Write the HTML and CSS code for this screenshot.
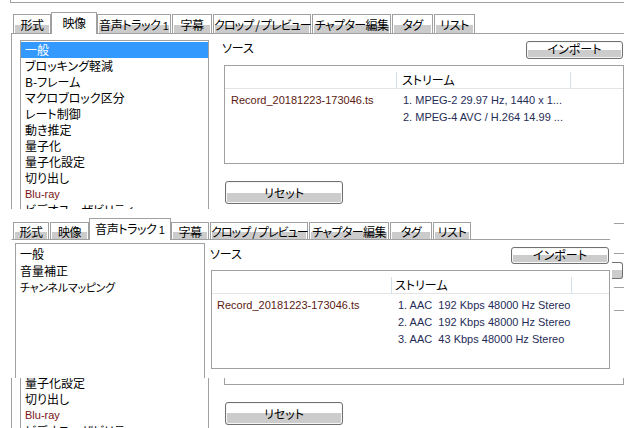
FILE: index.html
```html
<!DOCTYPE html>
<html lang="ja">
<head>
<meta charset="utf-8">
<title>Encoder settings</title>
<link rel="stylesheet" href="styles.css">
</head>
<body>
<div class="shot shot-top">
  <div class="win win-video">
    <div class="edge"></div>
    <div class="tabs">
      <div class="tab t-fmt">形式</div>
      <div class="tab t-vid active">映像</div>
      <div class="tab t-aud">音声トラック <span class="num">1</span></div>
      <div class="tab t-sub">字幕</div>
      <div class="tab t-crop">クロップ / プレビュー</div>
      <div class="tab t-chap">チャプター編集</div>
      <div class="tab t-tag">タグ</div>
      <div class="tab t-list">リスト</div>
    </div>
    <div class="panel">
      <ul class="listbox">
        <li class="sel">一般</li>
        <li>ブロッキング軽減</li>
        <li>B-フレーム</li>
        <li>マクロブロック区分</li>
        <li>レート制御</li>
        <li>動き推定</li>
        <li>量子化</li>
        <li>量子化設定</li>
        <li>切り出し</li>
        <li class="latin">Blu-ray</li>
        <li>ビデオユーザビリティ</li>
      </ul>
      <div class="side">
        <div class="src-row">
          <span class="src-label">ソース</span>
          <button class="btn btn-import">インポート</button>
        </div>
        <div class="streams">
          <div class="st-head">
            <div class="c1"></div>
            <div class="c2">ストリーム</div>
            <div class="c3"></div>
          </div>
          <div class="st-body">
            <div class="st-row"><div class="c1 file">Record_20181223-173046.ts</div><div class="c2 info">1. MPEG-2 29.97 Hz, 1440 x 1...</div></div>
            <div class="st-row"><div class="c1"></div><div class="c2 info">2. MPEG-4 AVC / H.264 14.99 ...</div></div>
          </div>
        </div>
        <button class="btn btn-reset">リセット</button>
      </div>
    </div>
  </div>
</div>

<div class="shot shot-mid">
  <div class="win win-audio">
    <div class="tabs">
      <div class="tab t-fmt">形式</div>
      <div class="tab t-vid">映像</div>
      <div class="tab t-aud active">音声トラック <span class="num">1</span></div>
      <div class="tab t-sub">字幕</div>
      <div class="tab t-crop">クロップ / プレビュー</div>
      <div class="tab t-chap">チャプター編集</div>
      <div class="tab t-tag">タグ</div>
      <div class="tab t-list">リスト</div>
    </div>
    <div class="panel">
      <ul class="listbox">
        <li>一般</li>
        <li>音量補正</li>
        <li class="small">チャンネルマッピング</li>
      </ul>
      <div class="side">
        <div class="src-row">
          <span class="src-label">ソース</span>
          <button class="btn btn-import">インポート</button>
        </div>
        <div class="streams">
          <div class="st-head">
            <div class="c1"></div>
            <div class="c2">ストリーム</div>
            <div class="c3"></div>
          </div>
          <div class="st-body">
            <div class="st-row"><div class="c1 file">Record_20181223-173046.ts</div><div class="c2 info">1. AAC  192 Kbps 48000 Hz Stereo</div></div>
            <div class="st-row"><div class="c1"></div><div class="c2 info">2. AAC  192 Kbps 48000 Hz Stereo</div></div>
            <div class="st-row"><div class="c1"></div><div class="c2 info">3. AAC  43 Kbps 48000 Hz Stereo</div></div>
          </div>
        </div>
      </div>
    </div>
  </div>
  <div class="strip">
    <div class="s-line s1"></div>
    <div class="s-line s2"></div>
    <div class="s-btn"></div>
    <div class="s-line s3"></div>
    <div class="s-line s4"></div>
  </div>
</div>

<div class="shot shot-low">
  <div class="win win-video win-scrolled">
    <div class="edge"></div>
    <div class="tabs">
      <div class="tab t-fmt">形式</div>
      <div class="tab t-vid active">映像</div>
      <div class="tab t-aud">音声トラック <span class="num">1</span></div>
      <div class="tab t-sub">字幕</div>
      <div class="tab t-crop">クロップ / プレビュー</div>
      <div class="tab t-chap">チャプター編集</div>
      <div class="tab t-tag">タグ</div>
      <div class="tab t-list">リスト</div>
    </div>
    <div class="panel">
      <ul class="listbox">
        <li class="sel">一般</li>
        <li>ブロッキング軽減</li>
        <li>B-フレーム</li>
        <li>マクロブロック区分</li>
        <li>レート制御</li>
        <li>動き推定</li>
        <li>量子化</li>
        <li>量子化設定</li>
        <li>切り出し</li>
        <li class="latin">Blu-ray</li>
        <li>ビデオユーザビリティ</li>
      </ul>
      <div class="side">
        <div class="src-row">
          <span class="src-label">ソース</span>
          <button class="btn btn-import">インポート</button>
        </div>
        <div class="streams">
          <div class="st-head">
            <div class="c1"></div>
            <div class="c2">ストリーム</div>
            <div class="c3"></div>
          </div>
          <div class="st-body">
            <div class="st-row"><div class="c1 file">Record_20181223-173046.ts</div><div class="c2 info">1. MPEG-2 29.97 Hz, 1440 x 1...</div></div>
            <div class="st-row"><div class="c1"></div><div class="c2 info">2. MPEG-4 AVC / H.264 14.99 ...</div></div>
          </div>
        </div>
        <button class="btn btn-reset">リセット</button>
      </div>
    </div>
  </div>
</div>
</body>
</html>
```

FILE: styles.css
```css
* {
  box-sizing: border-box;
  margin: 0;
  padding: 0;
}

body {
  width: 624px;
  height: 428px;
  overflow: hidden;
  background: #fff;
  color: #000;
  font-family: "Noto Sans CJK JP", "Liberation Sans", sans-serif;
  font-size: 12px;
  font-feature-settings: "palt";
}

.shot {
  width: 624px;
  overflow: hidden;
}

.shot-top { height: 209px; }
.shot-mid { height: 169px; display: flex; }
.shot-low { height: 50px; }

.win { width: 624px; }
.win-scrolled { margin-top: -157px; }

.edge {
  margin-left: 10px;
  height: 3px;
  border-left: 1px solid #a0a0a0;
  border-bottom: 1px solid #a0a0a0;
}

/* tabs */
.tabs {
  display: flex;
  align-items: flex-end;
  gap: 1px;
  height: 21px;
  margin: 9px 0 0 13px;
}

.tab {
  flex: none;
  height: 19px;
  line-height: 19px;
  text-align: center;
  white-space: nowrap;
  letter-spacing: -0.4px;
  border: 1px solid #a0a0a0;
  border-bottom: none;
  background: linear-gradient(#fff 0 55%, #cbcbcb 55%);
  box-shadow: inset 1px 1px 0 #fff, inset -1px 0 0 #fff;
}

.tab.active {
  position: relative;
  z-index: 1;
  height: 22px;
  line-height: 19px;
  margin: 0 -1px -1px -1px;
  background: #fff;
  box-shadow: none;
}

.num {
  font-family: "Liberation Sans", sans-serif;
  font-size: 11px;
  letter-spacing: 0;
}

.t-fmt { width: 38px; }
.t-vid { width: 40px; }
.t-vid.active { width: 46px; }
.t-aud { width: 74px; }
.t-sub { width: 40px; }
.t-crop { width: 98px; letter-spacing: -0.9px; }
.t-chap { width: 79px; letter-spacing: -0.6px; }
.t-tag { width: 41px; }
.t-list { width: 41px; }

/* panel */
.panel {
  display: flex;
  margin-left: 11px;
  border-top: 1px solid #a0a0a0;
  border-left: 1px solid #a0a0a0;
  padding: 6px 0 0 8px;
}

.listbox {
  list-style: none;
  flex: none;
  width: 189px;
  height: 210px;
  border: 1px solid #a0a0a0;
  padding: 1px 0;
}

.listbox li {
  height: 16px;
  line-height: 16px;
  padding-left: 4px;
  white-space: nowrap;
}

.listbox li.sel {
  background: #3399ff;
  color: #fff;
}

.listbox li.latin {
  font-family: "Liberation Sans", sans-serif;
  font-size: 11px;
  color: #7a1414;
}

.listbox li.small {
  font-size: 11px;
  letter-spacing: -0.3px;
}

.side {
  flex: 1;
  min-width: 0;
  padding-left: 13px;
}

.src-row {
  display: flex;
  justify-content: space-between;
  align-items: flex-start;
}

.src-label {
  line-height: 15px;
}

.btn {
  display: block;
  border: 1px solid #707070;
  border-radius: 3px;
  background: linear-gradient(#fff 0 50%, #cccccc 50%);
  box-shadow: inset 0 0 0 1px #f6f6f6;
  font-family: "Noto Sans CJK JP", sans-serif;
  font-size: 12px;
  font-feature-settings: "palt";
  color: #000;
  text-align: center;
}

.btn-import {
  width: 97px;
  height: 18px;
  margin: 1px 1px 0 0;
  line-height: 12px;
  padding-bottom: 3px;
}

.btn-reset {
  width: 118px;
  height: 23px;
  margin: 17px 0 0 3px;
  line-height: 20px;
}

/* streams list */
.streams {
  height: 99px;
  margin: 6px 0 0 2px;
  border: 1px solid #a0a0a0;
  padding-top: 6px;
}

.st-head {
  display: flex;
  height: 17px;
  line-height: 16px;
  border-bottom: 1px solid #e4e4e4;
}

.st-head .c1,
.st-head .c2 {
  border-right: 1px solid #d4e0ea;
}

.st-head .c2 {
  padding-left: 5px;
}

.c1 { flex: none; width: 172px; }
.c2 { flex: none; width: 174px; }
.c3 { flex: 1; }

.st-body {
  padding-top: 3px;
}

.st-row {
  display: flex;
  height: 17px;
  line-height: 17px;
  font-family: "Liberation Sans", sans-serif;
  font-size: 11px;
  white-space: pre;
}

.st-row .c1 { padding-left: 6px; }
.st-row .c2 { padding-left: 6px; }

.file { color: #5c1a12; }
.info { color: #1f2d58; }

/* audio window variant */
.win-audio {
  width: 610px;
  flex: none;
}

.win-audio .tabs { margin-top: 9px; }

.win-audio .tab {
  height: 17px;
  line-height: 17px;
}

.win-audio .tab.active {
  height: 22px;
  line-height: 19px;
}

.win-audio .t-fmt { width: 36px; }
.win-audio .t-vid { width: 39px; }
.win-audio .t-aud.active { width: 82px; }
.win-audio .t-sub { width: 38px; }
.win-audio .t-crop { width: 98px; }
.win-audio .t-chap { width: 80px; }
.win-audio .t-tag { width: 42px; }
.win-audio .t-list { width: 38px; }

.win-audio .panel {
  border-left-color: transparent;
  padding: 3px 0 0 3px;
}

.win-audio .listbox {
  width: 190px;
  height: 200px;
}

.win-audio .listbox li {
  height: 17px;
  line-height: 17px;
}

.win-audio .side { padding-left: 5px; }
.win-audio .src-label { margin-top: 3px; }

.win-audio .btn-import {
  width: 98px;
  height: 17px;
  margin-top: 4px;
  line-height: 12px;
  padding-bottom: 2px;
}

.win-audio .streams { margin-left: 1px; }
.win-audio .c1 { width: 180px; }
.win-audio .c2 { width: 180px; }
.win-audio .st-head .c2 { padding-left: 3px; }
.win-audio .st-row .c1 { padding-left: 5px; }

/* strip of the window behind */
.strip {
  flex: none;
  width: 14px;
  display: flex;
  flex-direction: column;
}

.s-line {
  height: 1px;
  margin-left: 4px;
  background: #a0a0a0;
}

.s1 { margin-top: 14px; }
.s2 { margin-top: 29px; }
.s3 { margin-top: 8px; }
.s4 { margin-top: 22px; }

.s-btn {
  height: 17px;
  width: 11px;
  margin: 8px 0 0 2px;
  border: 1px solid #707070;
  border-left: none;
  border-radius: 0 3px 3px 0;
  background: linear-gradient(#fff 0 50%, #cccccc 50%);
}
```
